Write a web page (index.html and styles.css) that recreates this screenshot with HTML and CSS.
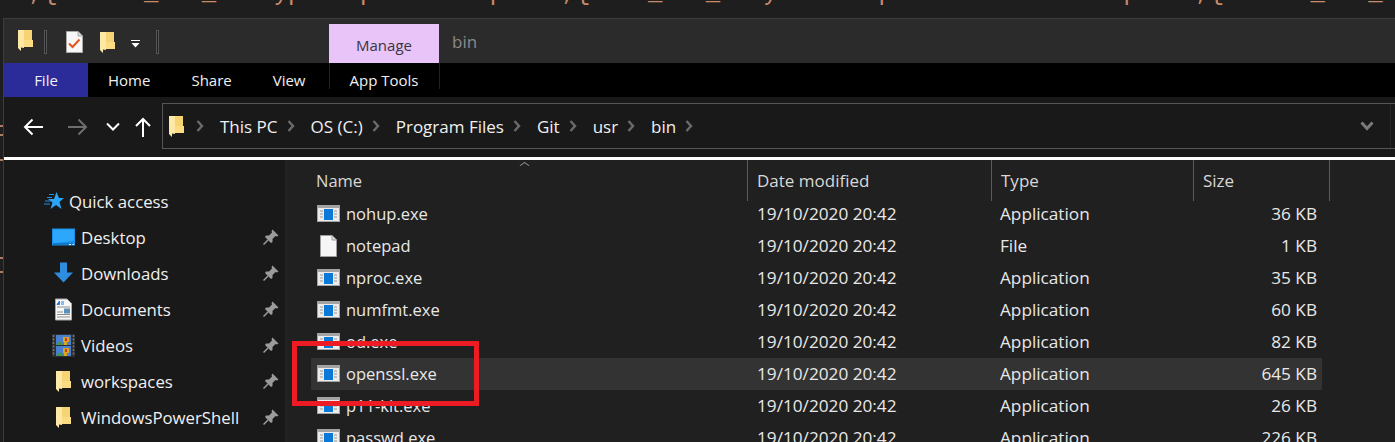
FILE: index.html
```html
<!DOCTYPE html>
<html lang="en">
<head>
  <title>bin</title>
  <meta charset="utf-8">
  <link rel="stylesheet" href="styles.css">
</head>
<body>
<svg class="defs" width="0" height="0">
  <symbol id="folder" viewBox="0 0 15 21">
    <path d="M5 0H14V3.500V10H15V17H4Z" fill="#f6d373"/>
    <path d="M0 0H6V17L6 18L3 17.500L3 21L0 18Z" fill="#fde8a6"/>
    <path d="M6 10H15V17H6Z" fill="#fbdc83"/>
  </symbol>
  <symbol id="exe" viewBox="0 0 23 17">
    <rect x="0" y="0" width="23" height="17" fill="#a3a3a3"/>
    <rect x="1" y="3" width="21" height="13" fill="#ececec"/>
    <rect x="7" y="4" width="9" height="11" fill="#0a78d7"/>
    <path d="M3 6H6M3 9H6M3 12H6M17 6H20M17 9H20M17 12H20" stroke="#9a9a9a" stroke-width="1"/>
  </symbol>
  <symbol id="pin" viewBox="0 0 16 16">
    <path d="M9.500 0.500L15.500 6.500L14 7.500L12.500 7L9.500 10L9.500 13L8 14L2 8L3 6.500L6 6.500L9 3.500L8.500 2Z" fill="#9b9b9b"/>
    <path d="M5 11L0.500 15.500" stroke="#9b9b9b" stroke-width="1.500"/>
  </symbol>
  <symbol id="crumb" viewBox="0 0 8 12">
    <path d="M1.500 1L6 6L1.500 11" fill="none" stroke="#6b6b6b" stroke-width="2.400"/>
  </symbol>
</svg>

<div class="code-band"><div class="code-line">  ,{      _   _    yp    p        p    ,{    _   _   y       p                p    ,{      _   _</div></div>

<div class="screen">
  <div class="gutter">
    <i class="tick"></i><i class="tick"></i><i class="tick"></i><i class="tick"></i><i class="tick"></i>
  </div>

  <div class="window">
    <div class="titlebar">
      <svg class="qat-folder"><use href="#folder"/></svg>
      <span class="qat-sep"></span>
      <svg class="qat-note" viewBox="0 0 17 22">
        <path d="M0.500 0.500H12L16.500 5V21.500H0.500Z" fill="#f7f7f7" stroke="#a8a8a8"/>
        <path d="M12 0.500V5H16.500" fill="#d9d9d9" stroke="#a8a8a8"/>
        <path d="M3 12.500L6.500 16L13.500 8.500" fill="none" stroke="#e8541c" stroke-width="2"/>
      </svg>
      <svg class="qat-folder second"><use href="#folder"/></svg>
      <svg class="qat-drop" viewBox="0 0 9 8">
        <path d="M0 0.500H9" stroke="#fff"/>
        <path d="M0.500 3H8.500L4.500 7.500Z" fill="#fff"/>
      </svg>
      <span class="qat-sep last"></span>
      <div class="manage-tab">Manage</div>
      <div class="window-name">bin</div>
    </div>

    <div class="tabs">
      <div class="tab file-tab">File</div>
      <div class="tab home-tab">Home</div>
      <div class="tab share-tab">Share</div>
      <div class="tab view-tab">View</div>
      <div class="tab tools-tab">App Tools</div>
    </div>

    <div class="toolbar">
      <div class="nav">
        <svg class="nav-back" viewBox="0 0 20 18"><path d="M20 9H2M9.500 1.500L2 9L9.500 16.500" fill="none" stroke="#fff" stroke-width="2"/></svg>
        <svg class="nav-forward" viewBox="0 0 20 18"><path d="M0 9H18M10.500 1.500L18 9L10.500 16.500" fill="none" stroke="#6e6e6e" stroke-width="2"/></svg>
        <svg class="nav-recent" viewBox="0 0 14 9"><path d="M1 1.500L7 7.500L13 1.500" fill="none" stroke="#fff" stroke-width="2"/></svg>
        <svg class="nav-up" viewBox="0 0 16 20"><path d="M8 20V2M1 9L8 2L15 9" fill="none" stroke="#fff" stroke-width="2"/></svg>
      </div>
      <div class="address">
        <svg class="address-folder"><use href="#folder"/></svg>
        <svg class="crumb-sep"><use href="#crumb"/></svg><span class="crumb">This PC</span>
        <svg class="crumb-sep"><use href="#crumb"/></svg><span class="crumb">OS (C:)</span>
        <svg class="crumb-sep"><use href="#crumb"/></svg><span class="crumb">Program Files</span>
        <svg class="crumb-sep"><use href="#crumb"/></svg><span class="crumb">Git</span>
        <svg class="crumb-sep"><use href="#crumb"/></svg><span class="crumb">usr</span>
        <svg class="crumb-sep"><use href="#crumb"/></svg><span class="crumb">bin</span>
        <svg class="crumb-sep"><use href="#crumb"/></svg>
        <svg class="address-more" viewBox="0 0 14 10"><path d="M1.500 1.500L7 7.500L12.500 1.500" fill="none" stroke="#7a7a7a" stroke-width="3"/></svg>
        <span class="address-end"></span>
      </div>
    </div>

    <div class="main">
      <div class="sidebar">
        <div class="quick">
          <svg class="star" viewBox="0 0 20 18">
            <path d="M12.500 0L15 6H20L15.500 10L17.500 17L12 13L6.500 17L8.500 10.500L4 7H10Z" fill="#2aa6f5"/>
            <path d="M5 2.500H10M3 5.500H8M1 9H7M0 12H6" stroke="#1f8fe0" stroke-width="1"/>
          </svg>
          <span>Quick access</span>
        </div>
        <div class="place">
          <svg class="place-icon" viewBox="0 0 23 18">
            <rect width="23" height="17" fill="#1a8fe8"/>
            <path d="M1 15V1H22V12Z" fill="#2ba8fb"/>
            <path d="M1 15.500H21" stroke="#0a5fae"/>
            <path d="M17 16H19M20.500 16H22" stroke="#fff"/>
          </svg>
          <span class="place-name">Desktop</span>
          <svg class="pin"><use href="#pin"/></svg>
        </div>
        <div class="place">
          <svg class="place-icon" viewBox="0 0 23 22">
            <path d="M8 0H15V10H21L11.500 20L2 10H8Z" fill="#2f8de0"/>
          </svg>
          <span class="place-name">Downloads</span>
          <svg class="pin"><use href="#pin"/></svg>
        </div>
        <div class="place">
          <svg class="place-icon" viewBox="0 0 23 22">
            <path d="M3.500 0.500H15L19.500 5V21.500H3.500Z" fill="#f7f7f7" stroke="#a8a8a8"/>
            <path d="M5 6L7.500 2.500V6ZM9 3.500H12M9 5.500H12" fill="#1f7fd8" stroke="#1f7fd8" stroke-width="1"/>
            <path d="M5 8.500H18M5 13.500H11M5 16H18M5 18.500H18" stroke="#8d8d8d"/>
            <rect x="12" y="10" width="6" height="5" fill="#5d90b8"/>
          </svg>
          <span class="place-name">Documents</span>
          <svg class="pin"><use href="#pin"/></svg>
        </div>
        <div class="place">
          <svg class="place-icon" viewBox="0 0 23 23">
            <rect width="23" height="23" fill="#2e2e2e"/>
            <rect x="4" y="1" width="15" height="10" fill="#4a7fd0"/>
            <rect x="4" y="12" width="15" height="10" fill="#4a7fd0"/>
            <path d="M4 11L8 7L11 11ZM4 22L8 18L11 22Z" fill="#3f9a3f"/>
            <path d="M11 3H17V8H15V11H12V8H11ZM11 14H17V19H15V22H12V19H11Z" fill="#d9a524"/>
            <path d="M13 4H15V7H13ZM13 15H15V18H13Z" fill="#c8382a"/>
            <path d="M1.500 1V22M21.500 1V22" stroke="#777" stroke-width="1.500" stroke-dasharray="2 1.500"/>
          </svg>
          <span class="place-name">Videos</span>
          <svg class="pin"><use href="#pin"/></svg>
        </div>
        <div class="place">
          <svg class="place-folder"><use href="#folder"/></svg>
          <span class="place-name">workspaces</span>
          <svg class="pin"><use href="#pin"/></svg>
        </div>
        <div class="place">
          <svg class="place-folder"><use href="#folder"/></svg>
          <span class="place-name">WindowsPowerShell</span>
          <svg class="pin"><use href="#pin"/></svg>
        </div>
      </div>

      <div class="files">
        <div class="columns">
          <div class="col col-name">Name<span class="sort-caret"></span></div>
          <div class="col col-date">Date modified</div>
          <div class="col col-type">Type</div>
          <div class="col col-size">Size</div>
        </div>
        <div class="rows">
          <div class="row">
            <div class="cell-name"><svg class="exe"><use href="#exe"/></svg>nohup.exe</div>
            <div>19/10/2020 20:42</div><div>Application</div><div class="cell-size">36 KB</div>
          </div>
          <div class="row">
            <div class="cell-name">
              <svg class="doc" viewBox="0 0 17 22"><path d="M0.500 0.500H12L16.500 5V21.500H0.500Z" fill="#f6f6f6" stroke="#9e9e9e"/><path d="M12 0.500V5H16.500" fill="#dcdcdc" stroke="#9e9e9e"/></svg>notepad
            </div>
            <div>19/10/2020 20:42</div><div>File</div><div class="cell-size">1 KB</div>
          </div>
          <div class="row">
            <div class="cell-name"><svg class="exe"><use href="#exe"/></svg>nproc.exe</div>
            <div>19/10/2020 20:42</div><div>Application</div><div class="cell-size">35 KB</div>
          </div>
          <div class="row">
            <div class="cell-name"><svg class="exe"><use href="#exe"/></svg>numfmt.exe</div>
            <div>19/10/2020 20:42</div><div>Application</div><div class="cell-size">60 KB</div>
          </div>
          <div class="row">
            <div class="cell-name"><svg class="exe"><use href="#exe"/></svg>od.exe</div>
            <div>19/10/2020 20:42</div><div>Application</div><div class="cell-size">82 KB</div>
          </div>
          <div class="row is-hover">
            <div class="cell-name"><svg class="exe"><use href="#exe"/></svg>openssl.exe</div>
            <div>19/10/2020 20:42</div><div>Application</div><div class="cell-size">645 KB</div>
          </div>
          <div class="row">
            <div class="cell-name"><svg class="exe"><use href="#exe"/></svg>p11-kit.exe</div>
            <div>19/10/2020 20:42</div><div>Application</div><div class="cell-size">26 KB</div>
          </div>
          <div class="row">
            <div class="cell-name"><svg class="exe"><use href="#exe"/></svg>passwd.exe</div>
            <div>19/10/2020 20:42</div><div>Application</div><div class="cell-size">226 KB</div>
          </div>
        </div>
      </div>
    </div>
  </div>
</div>

<div class="callout"></div>
</body>
</html>
```

FILE: styles.css
```css
html, body {
  margin: 0;
  height: 442px;
  overflow: hidden;
}

body {
  position: relative;
  background-color: #1e1e1e;
  color: #f0f0f0;
  font-family: "Open Sans", "Noto Sans", sans-serif;
  font-size: 16px;
}

.defs {
  position: absolute;
}

svg {
  display: block;
  flex: none;
}

/* editor text behind the window, only the bottoms of the glyphs show */
.code-band {
  height: 18px;
  overflow: hidden;
}

.code-line {
  margin-top: -11px;
  font-family: "Liberation Mono", monospace;
  font-size: 24px;
  line-height: 10px;
  white-space: pre;
  color: #c98a6c;
}

.screen {
  display: flex;
  height: 424px;
}

.gutter {
  width: 3px;
  display: flex;
  flex-direction: column;
  padding-top: 107px;
  gap: 7px;
}

.tick {
  display: block;
  height: 2px;
  background-color: #b07a60;
}

.tick:nth-child(3) { margin-top: 16px; }
.tick:nth-child(4) { margin-top: 89px; }
.tick:nth-child(5) { margin-top: 5px; }

.window {
  flex: 1;
  min-width: 0;
  display: flex;
  flex-direction: column;
  border-left: 1px solid #3c3c3c;
  border-top: 1px solid #3c3c3c;
}

/* title bar */
.titlebar {
  height: 44px;
  flex: none;
  display: flex;
  align-items: flex-start;
  background-color: #2b2b2b;
}

.qat-folder {
  width: 15px;
  height: 21px;
  margin: 11px 0 0 14px;
}

.qat-folder.second {
  margin: 13px 0 0 17px;
}

.qat-sep {
  width: 1px;
  height: 22px;
  margin: 11px 0 0 11px;
  border: 1px solid #555;
  background-color: #222;
}

.qat-sep.last {
  margin-left: 16px;
}

.qat-note {
  width: 17px;
  height: 22px;
  margin: 12px 0 0 19px;
}

.qat-drop {
  width: 9px;
  height: 8px;
  margin: 21px 0 0 16px;
}

.manage-tab {
  width: 110px;
  height: 39px;
  margin: 5px 0 0 170px;
  box-sizing: border-box;
  padding-top: 11px;
  background-color: #e8c4f8;
  color: #3a3440;
  font-size: 15px;
  text-align: center;
}

.window-name {
  margin: 11px 0 0 13px;
  color: #8a8a8a;
  font-size: 17px;
}

/* ribbon tabs */
.tabs {
  height: 34px;
  flex: none;
  display: flex;
  align-items: stretch;
  background-color: #000;
  font-size: 15px;
  line-height: 34px;
}

.file-tab {
  width: 84px;
  background-color: #2b2b99;
  text-align: center;
}

.home-tab { margin-left: 20px; }
.share-tab { margin-left: 41px; }
.view-tab { margin-left: 41px; }

.tools-tab {
  width: 109px;
  height: 26px;
  margin-left: 23px;
  text-align: center;
  border-left: 1px solid #222;
  border-right: 1px solid #222;
}

/* navigation and address */
.toolbar {
  height: 60px;
  flex: none;
  display: flex;
  background-color: #191919;
  box-sizing: border-box;
  padding-top: 6px;
}

.nav {
  width: 158px;
  flex: none;
  display: flex;
  align-items: flex-start;
}

.nav-back {
  width: 20px;
  height: 18px;
  margin: 15px 0 0 19px;
}

.nav-forward {
  width: 20px;
  height: 18px;
  margin: 15px 0 0 25px;
}

.nav-recent {
  width: 14px;
  height: 9px;
  margin: 19px 0 0 18px;
}

.nav-up {
  width: 16px;
  height: 20px;
  margin: 14px 0 0 15px;
}

.address {
  flex: 1;
  height: 46px;
  box-sizing: border-box;
  display: flex;
  align-items: center;
  border: 1px solid #555;
  border-right: 0;
  padding-left: 6px;
  font-size: 17px;
}

.address-folder {
  width: 15px;
  height: 21px;
  margin-right: 3px;
}

.crumb-sep {
  width: 8px;
  height: 12px;
  margin: 0 16px 0 9px;
}

.address-more {
  width: 14px;
  height: 10px;
  margin-left: auto;
}

.address-end {
  width: 1px;
  height: 44px;
  margin: 0 4px 0 16px;
  background-color: #262626;
}

/* sidebar and file list */
.main {
  flex: 1;
  min-height: 0;
  display: flex;
  border-top: 3px solid #fff;
  border-image: linear-gradient(#fff 66%, #bbb 66%) 1;
}

.sidebar {
  width: 283px;
  flex: none;
  box-sizing: border-box;
  background-color: #191919;
  border-right: 2px solid #232323;
  padding-top: 23px;
  font-size: 16.8px;
}

.quick {
  height: 36px;
  display: flex;
  align-items: center;
  padding-left: 40px;
}

.star {
  width: 20px;
  height: 18px;
  margin-right: 5px;
}

.place {
  height: 36px;
  display: flex;
  align-items: center;
  padding-left: 48px;
}

.place-icon {
  width: 23px;
  height: 23px;
  margin-right: 6px;
}

.place-folder {
  width: 15px;
  height: 21px;
  margin: 0 10px 0 4px;
}

.pin {
  width: 16px;
  height: 16px;
  margin-left: auto;
  margin-right: 6px;
}

.files {
  flex: 1;
  min-width: 0;
  background-color: #202020;
}

.columns {
  display: flex;
  height: 41px;
  font-size: 17px;
}

.col {
  box-sizing: border-box;
  padding: 9px 0 0 9px;
  border-right: 1px solid #5a5a5a;
  color: #d8d8d8;
  position: relative;
}

.col-name { width: 461px; padding-left: 29px; font-size: 16.5px; }
.col-date { width: 244px; }
.col-type { width: 202px; }
.col-size { width: 136px; }

.sort-caret {
  position: absolute;
  left: 234px;
  top: 2px;
  width: 6px;
  height: 6px;
  border-left: 1px solid #9a9a9a;
  border-top: 1px solid #9a9a9a;
  transform: scaleY(0.7) rotate(45deg);
}

.rows {
  margin: -3px 0 0 24px;
  width: 1011px;
}

.row {
  height: 32px;
  box-sizing: border-box;
  padding-bottom: 1px;
  display: grid;
  grid-template-columns: 446px 243px 193px 124px;
  align-items: center;
  color: #e8e8e8;
  font-size: 17.2px;
}

.is-hover {
  background-color: #333;
}

.cell-name {
  display: flex;
  align-items: center;
  padding-left: 6px;
  font-size: 16.5px;
}

.exe {
  width: 23px;
  height: 17px;
  margin-right: 6px;
}

.doc {
  width: 17px;
  height: 22px;
  margin: 0 9px 0 3px;
}

.cell-size {
  text-align: right;
}

/* annotation drawn over the screenshot */
.callout {
  position: absolute;
  left: 292px;
  top: 341px;
  width: 187px;
  height: 65px;
  box-sizing: border-box;
  border: 5px solid #ed1c24;
}
```
